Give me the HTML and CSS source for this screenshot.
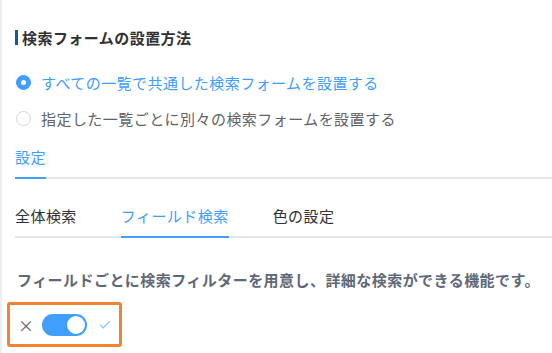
FILE: index.html
```html
<!DOCTYPE html>
<html lang="ja">
<head>
<meta charset="utf-8">
<link rel="stylesheet" href="styles.css">
</head>
<body>
<div class="page">
  <div class="title">検索フォームの設置方法</div>
  <div class="radios">
    <label class="radio checked"><span class="dot"></span><span class="label">すべての一覧で共通した検索フォームを設置する</span></label>
    <label class="radio"><span class="dot"></span><span class="label">指定した一覧ごとに別々の検索フォームを設置する</span></label>
  </div>
  <div class="nav nav-top">
    <div class="tab active">設定</div>
  </div>
  <div class="nav nav-sub">
    <div class="tab">全体検索</div>
    <div class="tab active">フィールド検索</div>
    <div class="tab">色の設定</div>
  </div>
  <p class="desc">フィールドごとに検索フィルターを用意し、詳細な検索ができる機能です。</p>
  <div class="switch-box">
    <span class="off">×</span>
    <span class="switch"><span class="knob"></span></span>
    <svg class="on" width="12" height="9" viewBox="0 0 12 9"><path d="M1 4.6 L4.3 7.8 L11 1.2" fill="none" stroke="#8cc5ff" stroke-width="1.3"/></svg>
  </div>
</div>
</body>
</html>
```
FILE: styles.css
```css
html, body {
  margin: 0;
  padding: 0;
  background: #fff;
}
body {
  font-family: "Noto Sans CJK JP", "Noto Sans", sans-serif;
  font-size: 15px;
  letter-spacing: 0.45px;
  color: #303133;
}
.page {
  border-left: 2px solid #eeeff3;
  padding: 30px 0 0 13px;
  height: 353px;
  box-sizing: border-box;
  overflow: hidden;
}
.title {
  border-left: 3px solid #14598a;
  padding-left: 4px;
  height: 15px;
  line-height: 15px;
  font-weight: 700;
  color: #303133;
}
.radios {
  margin-top: 19px;
  display: flex;
  flex-direction: column;
}
.radio {
  display: flex;
  align-items: center;
  height: 36px;
  gap: 10px;
  color: #606266;
}
.radio .dot {
  width: 15px;
  height: 15px;
  box-sizing: border-box;
  border-radius: 50%;
  border: 1px solid #d4d7de;
  background: #fff;
  display: flex;
  align-items: center;
  justify-content: center;
  margin-left: 1px;
}
.radio.checked .dot {
  background: #409eff;
  border-color: #409eff;
}
.radio.checked .dot::after {
  content: "";
  width: 5px;
  height: 5px;
  border-radius: 50%;
  background: #fff;
}
.radio.checked .label {
  color: #409eff;
}
.nav {
  display: flex;
  border-bottom: 2px solid #e4e7ed;
  gap: 44px;
}
.nav-top .tab {
  height: 41px;
  line-height: 41px;
}
.nav-sub {
  margin-top: 16px;
}
.nav-sub .tab {
  height: 41px;
  line-height: 41px;
  color: #303133;
}
.tab.active {
  color: #409eff;
  border-bottom: 2px solid #409eff;
  margin-bottom: -2px;
}
.desc {
  margin: 30px 0 0 2px;
  line-height: 24px;
  font-weight: 700;
  color: #5f6876;
}
.switch-box {
  margin: 10px 0 0 -8px;
  display: inline-flex;
  align-items: center;
  height: 45px;
  box-sizing: border-box;
  border: 3px solid #f58233;
  border-radius: 3px;
  padding: 0 8px;
  width: 115px;
}
.off {
  font-size: 16px;
  color: #606266;
  width: 10px;
  line-height: 1;
}
.switch {
  margin-left: 14px;
  width: 46px;
  height: 22px;
  border-radius: 11px;
  background: #409eff;
  display: flex;
  align-items: center;
  justify-content: flex-end;
  padding-right: 2px;
  box-sizing: border-box;
}
.knob {
  width: 18px;
  height: 18px;
  border-radius: 50%;
  background: #fff;
}
.on {
  margin-left: 12px;
}
```
